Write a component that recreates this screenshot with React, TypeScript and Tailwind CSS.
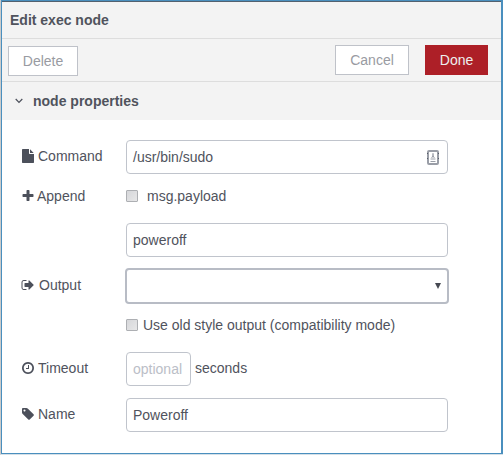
import type { ReactNode } from "react";

const paths = {
  file: "M1152 512V40q22 14 36 28l408 408q14 14 28 36h-472zm-128 32q0 40 28 68t68 28h544v1056q0 40-28 68t-68 28H224q-40 0-68-28t-28-68V96q0-40 28-68t68-28h800v544z",
  plus: "M1600 736v192q0 40-28 68t-68 28h-416v416q0 40-28 68t-68 28H800q-40 0-68-28t-28-68v-416H288q-40 0-68-28t-28-68V736q0-40 28-68t68-28h416V224q0-40 28-68t68-28h192q40 0 68 28t28 68v416h416q40 0 68 28t28 68z",
  signOut:
    "M704 1440q0 4 1 20t.5 26.5-3 23.5-10 19.5-20.5 6.5h-320q-119 0-203.5-84.5t-84.5-203.5v-704q0-119 84.5-203.5t203.5-84.5h320q13 0 22.5 9.5t9.5 22.5q0 4 1 20t.5 26.5-3 23.5-10 19.5-20.5 6.5h-320q-66 0-113 47t-47 113v704q0 66 47 113t113 47h312l11.5 1 11.5 3 8 5.5 7 9 2 13.5zm928-544q0 26-19 45l-544 544q-19 19-45 19t-45-19-19-45v-288h-448q-26 0-45-19t-19-45v-384q0-26 19-45t45-19h448v-288q0-26 19-45t45-19 45 19l544 544q19 19 19 45z",
  clock:
    "M1024 544v448q0 14-9 23t-23 9h-320q-14 0-23-9t-9-23v-64q0-14 9-23t23-9h224v-352q0-14 9-23t23-9h64q14 0 23 9t9 23zm416 352q0-148-73-273t-198-198-273-73-273 73-198 198-73 273 73 273 198 198 273 73 273-73 198-198 73-273zm224 0q0 209-103 385.5t-279.5 279.5-385.5 103-385.5-103-279.5-279.5-103-385.5 103-385.5 279.5-279.5 385.5-103 385.5 103 279.5 279.5 103 385.5z",
  tag: "M576 448q0-53-37.5-90.5t-90.5-37.5-90.5 37.5-37.5 90.5 37.5 90.5 90.5 37.5 90.5-37.5 37.5-90.5zm1067 576q0 53-37 90l-491 492q-39 37-91 37-53 0-90-37l-715-716q-38-37-64.5-101t-26.5-117v-416q0-52 38-90t90-38h416q53 0 117 26.5t102 64.5l715 714q37 39 37 91z",
};

interface LabelProps {
  icon: keyof typeof paths;
  gap?: string;
  pad?: string;
  children: ReactNode;
}

function Label({ icon, gap = "gap-[3px]", pad = "pb-[2px]", children }: LabelProps) {
  return (
    <div className={`flex w-[105px] shrink-0 items-center leading-5 ${pad} ${gap}`}>
      <svg viewBox="0 0 1792 1792" className="size-3.5 shrink-0 fill-[#4c505b]">
        <path d={paths[icon]} />
      </svg>
      <span>{children}</span>
    </div>
  );
}

function Field({ children }: { children: ReactNode }) {
  return (
    <div className="flex h-[34px] w-[322px] items-center justify-between rounded-[4px] border border-[#c0c4cc] bg-white pr-2 pl-[6px] leading-5">
      {children}
    </div>
  );
}

function Checkbox() {
  return <span className="size-3 shrink-0 rounded-[1px] border border-[#adafb3] bg-gradient-to-br from-[#d6d7da] to-[#e7e7e8]" />;
}

export default function App() {
  return (
    <div className="h-[455px] w-[503px] border-b border-l border-b-[#d5e0e8] border-l-[#cbcbcb] font-['Liberation_Sans',Arial,sans-serif] text-sm text-[#50535d]">
      <div className="flex h-[454px] flex-col border-t border-r-2 border-b border-l border-[#4a8fbe] bg-white">
        <header className="h-[38px] shrink-0 border-t border-b border-t-[#52616f] border-b-[#dddddd] bg-[#f3f3f3] pt-[8px] pl-2 leading-5 font-bold">
          Edit exec node
        </header>
        <div className="flex h-[43px] shrink-0 items-start border-b border-[#dddddd] bg-[#f3f3f3] pt-[6px] pl-[6px] text-[#999ba2]">
          <button className="mt-px h-[30px] w-[70px] border border-[#bfc2c9] bg-white leading-5">Delete</button>
          <button className="ml-[257px] h-[30px] w-[74px] border border-[#bfc2c9] bg-white leading-5">Cancel</button>
          <button className="ml-4 h-[30px] w-[63px] bg-[#ad1f27] leading-5 text-[#eee]">Done</button>
        </div>
        <div className="flex h-[38px] shrink-0 items-center bg-[#f3f3f3] pl-[13px] font-bold">
          <svg viewBox="0 0 8 6" className="mr-[10px] h-[6px] w-2 fill-none stroke-[#4c505b]" strokeWidth="1.2">
            <path d="M.7 1 4 4.5 7.3 1" />
          </svg>
          <span className="leading-5">node properties</span>
        </div>
        <main className="flex flex-col pt-5 pl-[19px]">
          <div className="flex h-[34px] items-center">
            <Label icon="file">Command</Label>
            <Field>
              <span>/usr/bin/sudo</span>
              <svg viewBox="0 0 12 15" className="h-[15px] w-3" fill="none" stroke="#9a9ea7">
                <rect x="1" y="1" width="10" height="13" rx="1" strokeWidth="2" />
                <path d="M6 3.2v2.6" strokeWidth="1.4" />
                <path d="M4.7 8 6 5.5 7.3 8" strokeWidth="1" />
                <path d="M3.5 9h5M3.5 11.5h5" strokeWidth="1" />
                <path d="M.5 3v1M.5 8v1M11.5 3v1M11.5 8v1" stroke="#555b67" strokeWidth="1" />
              </svg>
            </Field>
          </div>
          <div className="mt-2 flex h-7 items-center">
            <Label icon="plus" gap="gap-[2px]" pad="pb-0">Append</Label>
            <Checkbox />
            <span className="ml-[9px] leading-5">msg.payload</span>
          </div>
          <div className="mt-[13px] pl-[105px]">
            <Field>poweroff</Field>
          </div>
          <div className="mt-[11px] flex h-9 items-center">
            <Label icon="signOut" gap="gap-1">Output</Label>
            <div className="-ml-px flex h-9 w-[324px] items-center justify-end rounded-[4px] border-2 border-[#b8bcc5] pr-[6px]">
              <span className="size-0 border-x-[3px] border-t-[6px] border-x-transparent border-t-[#464952]" />
            </div>
          </div>
          <div className="mt-[9px] flex h-6 items-center pl-[105px]">
            <Checkbox />
            <span className="ml-[5px] leading-5">Use old style output (compatibility mode)</span>
          </div>
          <div className="mt-[15px] flex h-[34px] items-center">
            <Label icon="clock">Timeout</Label>
            <div className="flex h-[34px] w-[65px] items-center rounded-[4px] border border-[#c0c4cc] pl-[6px] leading-5 text-[#bbbec7]">optional</div>
            <span className="ml-1 pb-[2px] leading-5">seconds</span>
          </div>
          <div className="mt-3 flex h-[34px] items-center">
            <Label icon="tag">Name</Label>
            <Field>Poweroff</Field>
          </div>
        </main>
      </div>
    </div>
  );
}
